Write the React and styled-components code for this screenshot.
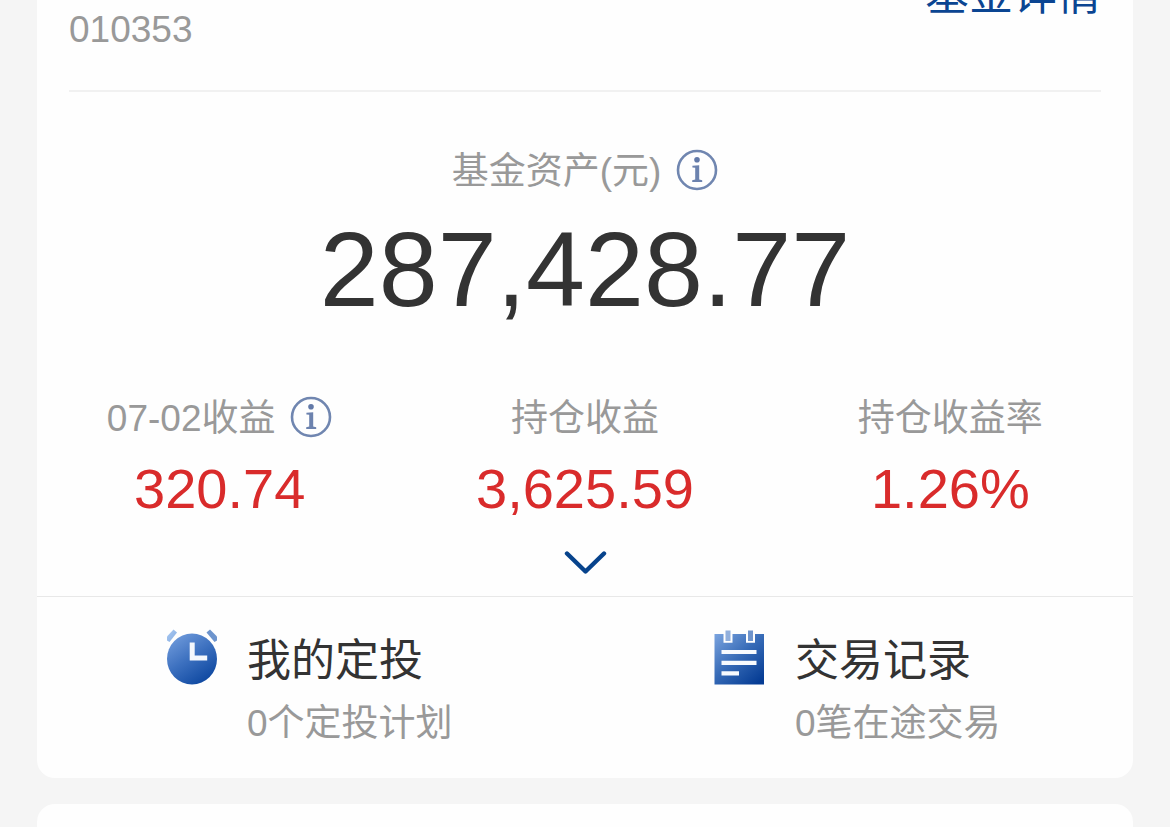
import React from "react";
import styled, { createGlobalStyle } from "styled-components";

const GlobalStyle = createGlobalStyle`
  *, *::before, *::after { box-sizing: border-box; }
  body {
    margin: 0;
    background: #f5f5f5;
    color: #333333;
    font-family: "Liberation Sans", "Noto Sans CJK SC", sans-serif;
  }
  #root { height: 100vh; overflow: hidden; }
  h2, p, dl, dt, dd { margin: 0; font-weight: 400; }
`;

const Page = styled.main`
  display: flex;
  flex-direction: column;
  gap: 26px;
  padding: 0 37px;
`;

const Card = styled.section`
  background: #fefefe;
  border-radius: 18px;
`;

const FundCard = styled(Card)`
  margin-top: -32px;
`;

const NextCard = styled(Card)`
  height: 120px;
`;

const Header = styled.header`
  display: flex;
  justify-content: space-between;
  margin: 0 32px;
  padding-bottom: 34px;
  border-bottom: 2px solid #f1f1f1;
`;

const FundCode = styled.p`
  align-self: flex-end;
  color: #999999;
  font-size: 37px;
  line-height: 52px;
`;

const DetailLink = styled.a`
  height: 88px;
  color: #0b4592;
  font-size: 44px;
  line-height: 54px;
  text-decoration: none;
`;

const Asset = styled.dl`
  display: flex;
  flex-direction: column;
  align-items: center;
  gap: 13px;
  padding: 52px 32px 62px;
`;

const Label = styled.dt`
  display: flex;
  align-items: flex-start;
  justify-content: center;
  gap: 15px;
  height: 52px;
  color: #999999;
  font-size: 37px;
  line-height: 56px;
`;

const AssetValue = styled.dd`
  font-size: 106px;
  line-height: 120px;
`;

const Stats = styled.dl`
  display: grid;
  grid-template-columns: repeat(3, 1fr);
`;

const Stat = styled.div`
  display: flex;
  flex-direction: column;
  gap: 14px;
  text-align: center;
`;

const StatValue = styled.dd`
  color: #d92b2b;
  font-size: 56px;
  line-height: 64px;
`;

const IconButton = styled.button`
  display: flex;
  padding: 0;
  border: 0;
  background: none;
  cursor: pointer;
`;

const InfoIconButton = styled(IconButton)`
  padding-top: 5px;
`;

const ExpandButton = styled(IconButton)`
  margin: 0 auto;
  padding: 29px 20px 22px;
`;

const Actions = styled.nav`
  display: grid;
  grid-template-columns: repeat(2, 1fr);
  border-top: 1px solid #e8e8e8;
`;

const Action = styled.a`
  display: flex;
  align-items: flex-start;
  gap: 29px;
  padding: 32px 0 28px 129px;
  color: inherit;
  text-decoration: none;
`;

const ActionText = styled.div`
  display: flex;
  flex-direction: column;
  gap: 11px;
  padding-top: 6px;
`;

const ActionTitle = styled.h2`
  font-size: 44px;
  line-height: 52px;
`;

const ActionNote = styled.p`
  color: #999999;
  font-size: 37px;
  line-height: 52px;
`;

function InfoButton({ label }) {
  return (
    <InfoIconButton type="button" aria-label={label}>
      <svg width="42" height="42" viewBox="0 0 42 42" aria-hidden="true">
        <circle cx="21" cy="21" r="19" fill="none" stroke="#7086b0" strokeWidth="2.6" />
        <circle cx="21" cy="10.8" r="2.8" fill="#6279a8" />
        <path d="M16.4 16.8 L23.2 16.2 V30.6 L26.2 31.2 V33 H16.2 V31.2 L19.2 30.6 V18.8 L16.4 18.4 Z" fill="#6c82ae" />
      </svg>
    </InfoIconButton>
  );
}

function ClockIcon() {
  return (
    <svg width="52" height="56" viewBox="0 0 52 56" aria-hidden="true">
      <defs>
        <linearGradient id="clockFace" x1="0.15" y1="0.1" x2="0.75" y2="1">
          <stop offset="0" stopColor="#6a96d8" />
          <stop offset="0.45" stopColor="#3c70bf" />
          <stop offset="1" stopColor="#0c469f" />
        </linearGradient>
        <linearGradient id="clockBell" x1="0" y1="0" x2="1" y2="1">
          <stop offset="0" stopColor="#a9c9f2" />
          <stop offset="1" stopColor="#86ade2" />
        </linearGradient>
      </defs>
      <path d="M1 7.5 L7.5 0.5 L11 3.5 L3.5 13 L1 11.5 Z" fill="url(#clockBell)" />
      <path d="M51 7.5 L44 0.5 L40.5 3.5 L48.5 13 L51 11.5 Z" fill="#6d94cd" />
      <ellipse cx="26" cy="30" rx="25" ry="25.4" fill="url(#clockFace)" />
      <path d="M26.2 13.6 V29 H41.2" fill="none" stroke="#f4f8fd" strokeWidth="5" />
    </svg>
  );
}

function RecordIcon() {
  return (
    <svg width="52" height="56" viewBox="0 0 52 56" aria-hidden="true">
      <defs>
        <linearGradient id="recordPage" x1="0" y1="0" x2="0.85" y2="1">
          <stop offset="0" stopColor="#7ba4df" />
          <stop offset="0.5" stopColor="#376bb7" />
          <stop offset="1" stopColor="#053c94" />
        </linearGradient>
      </defs>
      <path d="M0.5 5 H50 V55.5 H0.5 Z" fill="url(#recordPage)" />
      <path d="M9.5 4 V13.8 H18.5 V4 M32 4 V13.8 H41 V4" fill="#fefefe" />
      <path d="M11.5 1.5 H16.5 V12 H11.5 Z" fill="#91afdc" />
      <path d="M34 1.5 H39 V12 H34 Z" fill="#6f94cc" />
      <path d="M7.5 23 H42.5 M7.5 33.8 H42.5 M7.5 44.4 H25" fill="none" stroke="#f7fafe" strokeWidth="4.2" />
    </svg>
  );
}

export default function App() {
  return (
    <>
      <GlobalStyle />
      <Page>
        <FundCard>
          <Header>
            <FundCode>010353</FundCode>
            <DetailLink href="#detail">基金详情</DetailLink>
          </Header>
          <Asset>
            <Label>
              基金资产(元)
              <InfoButton label="基金资产说明" />
            </Label>
            <AssetValue>287,428.77</AssetValue>
          </Asset>
          <Stats>
            <Stat>
              <Label>
                07-02收益
                <InfoButton label="收益说明" />
              </Label>
              <StatValue>320.74</StatValue>
            </Stat>
            <Stat>
              <Label>持仓收益</Label>
              <StatValue>3,625.59</StatValue>
            </Stat>
            <Stat>
              <Label>持仓收益率</Label>
              <StatValue>1.26%</StatValue>
            </Stat>
          </Stats>
          <ExpandButton type="button" aria-label="展开">
            <svg width="44" height="24" viewBox="0 0 44 24" aria-hidden="true">
              <path
                d="M4 3.5 L22.5 21.5 L41 3.5"
                fill="none"
                stroke="#07438c"
                strokeWidth="4.4"
                strokeLinecap="round"
                strokeLinejoin="round"
              />
            </svg>
          </ExpandButton>
          <Actions>
            <Action href="#plans">
              <ClockIcon />
              <ActionText>
                <ActionTitle>我的定投</ActionTitle>
                <ActionNote>0个定投计划</ActionNote>
              </ActionText>
            </Action>
            <Action href="#records">
              <RecordIcon />
              <ActionText>
                <ActionTitle>交易记录</ActionTitle>
                <ActionNote>0笔在途交易</ActionNote>
              </ActionText>
            </Action>
          </Actions>
        </FundCard>
        <NextCard />
      </Page>
    </>
  );
}
